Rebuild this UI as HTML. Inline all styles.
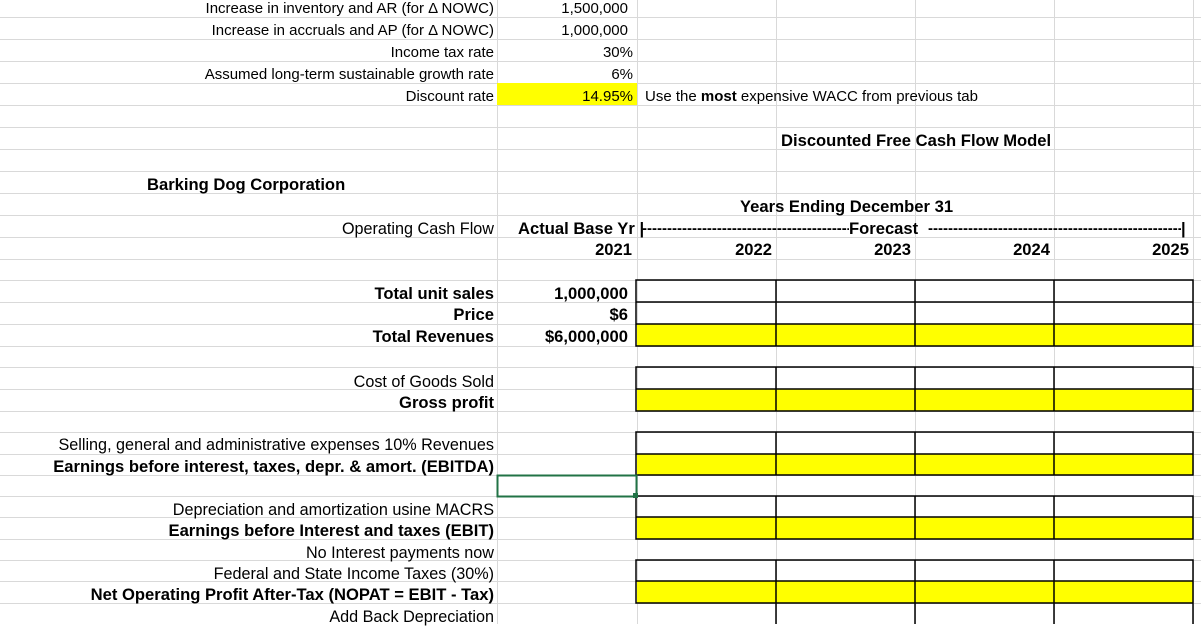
<!DOCTYPE html>
<html><head><meta charset="utf-8"><style>
body{margin:0;width:1201px;height:624px;overflow:hidden;background:#fff;position:relative;font-family:"Liberation Sans",Arial,sans-serif;color:#000}
.h{position:absolute;left:0;width:1201px;height:1px;background:#d9d9d9}
.v{position:absolute;top:0;height:624px;width:1px;background:#d9d9d9}
.t{position:absolute;height:22px;line-height:22px;font-size:16.2px;white-space:nowrap;margin-top:2px}
.r{text-align:right}
.b{font-weight:bold;font-size:16.6px}
.c{font-size:15px}
.y{background:#ffff00}
.d{position:absolute;overflow:hidden;height:22px;line-height:22px;font-size:15px;font-weight:bold;white-space:nowrap;margin-top:2px}
</style></head><body>
<div class="h" style="top:17px"></div><div class="h" style="top:39px"></div><div class="h" style="top:61px"></div><div class="h" style="top:83px"></div><div class="h" style="top:105px"></div><div class="h" style="top:127px"></div><div class="h" style="top:149px"></div><div class="h" style="top:171px"></div><div class="h" style="top:193px"></div><div class="h" style="top:215px"></div><div class="h" style="top:237px"></div><div class="h" style="top:259px"></div><div class="h" style="top:280px"></div><div class="h" style="top:302px"></div><div class="h" style="top:324px"></div><div class="h" style="top:346px"></div><div class="h" style="top:367px"></div><div class="h" style="top:389px"></div><div class="h" style="top:411px"></div><div class="h" style="top:432px"></div><div class="h" style="top:454px"></div><div class="h" style="top:475px"></div><div class="h" style="top:496px"></div><div class="h" style="top:517px"></div><div class="h" style="top:539px"></div><div class="h" style="top:560px"></div><div class="h" style="top:581px"></div><div class="h" style="top:603px"></div>
<div class="v" style="left:497px"></div><div class="v" style="left:637px"></div><div class="v" style="left:776px"></div><div class="v" style="left:915px"></div><div class="v" style="left:1054px"></div><div class="v" style="left:1193px"></div>

<div style="position:absolute;left:497px;top:83px;width:140px;height:22px;background:#ff0"></div>
<div class="y" style="position:absolute;left:637px;top:324px;width:556px;height:22px"></div>
<div class="y" style="position:absolute;left:637px;top:389px;width:556px;height:22px"></div>
<div class="y" style="position:absolute;left:637px;top:454px;width:556px;height:21px"></div>
<div class="y" style="position:absolute;left:637px;top:517px;width:556px;height:22px"></div>
<div class="y" style="position:absolute;left:637px;top:581px;width:556px;height:22px"></div>

<svg style="position:absolute;left:0;top:0" width="1201" height="624">
<g stroke="#000" stroke-width="1.5" fill="none">
<path d="M636 280H1193V346H636Z M636 302H1193 M636 324H1193 M776 280V346 M915 280V346 M1054 280V346"/>
<path d="M636 367H1193V411H636Z M636 389H1193 M776 367V411 M915 367V411 M1054 367V411"/>
<path d="M636 432H1193V475H636Z M636 454H1193 M776 432V475 M915 432V475 M1054 432V475"/>
<path d="M636 496H1193V539H636Z M636 517H1193 M776 496V539 M915 496V539 M1054 496V539"/>
<path d="M636 560H1193V603H636Z M636 581H1193 M776 560V624 M915 560V624 M1054 560V624 M1193 603V624"/>
</g>
<rect x="497.5" y="475.5" width="139" height="21" fill="none" stroke="#217346" stroke-width="2"/>
<rect x="633" y="493" width="5" height="5" fill="#217346"/>
</svg>

<div class="t r c" style="right:707px;top:-4px">Increase in inventory and AR (for Δ NOWC)</div>
<div class="t r c" style="right:573px;top:-4px">1,500,000</div>
<div class="t r c" style="right:707px;top:18px">Increase in accruals and AP (for Δ NOWC)</div>
<div class="t r c" style="right:573px;top:18px">1,000,000</div>
<div class="t r c" style="right:707px;top:40px">Income tax rate</div>
<div class="t r c" style="right:568px;top:40px">30%</div>
<div class="t r c" style="right:707px;top:62px">Assumed long-term sustainable growth rate</div>
<div class="t r c" style="right:568px;top:62px">6%</div>
<div class="t r c" style="right:707px;top:84px">Discount rate</div>
<div class="t r c" style="right:568px;top:84px">14.95%</div>
<div class="t c" style="left:645px;top:84px">Use the <b>most</b> expensive WACC from previous tab</div>

<div class="t b" style="left:781px;top:128px">Discounted Free Cash Flow Model</div>
<div class="t b" style="left:147px;top:172px">Barking Dog Corporation</div>
<div class="t b" style="left:740px;top:194px">Years Ending December 31</div>
<div class="t r" style="right:707px;top:216px">Operating Cash Flow</div>
<div class="t b" style="left:518px;top:216px">Actual Base Yr |</div>
<div class="d" style="left:642px;top:216px;width:207px">--------------------------------------------------------------------------------</div>
<div class="t b" style="left:849px;top:216px">Forecast</div>
<div class="d" style="left:928px;top:216px;width:253px">----------------------------------------------------------------------------------------------</div>
<div class="t b" style="left:1181px;top:216px">|</div>
<div class="t b r" style="right:569px;top:237px">2021</div>
<div class="t b r" style="right:429px;top:237px">2022</div>
<div class="t b r" style="right:290px;top:237px">2023</div>
<div class="t b r" style="right:151px;top:237px">2024</div>
<div class="t b r" style="right:12px;top:237px">2025</div>

<div class="t b r" style="right:707px;top:281px">Total unit sales</div>
<div class="t b r" style="right:573px;top:281px">1,000,000</div>
<div class="t b r" style="right:707px;top:302px">Price</div>
<div class="t b r" style="right:573px;top:302px">$6</div>
<div class="t b r" style="right:707px;top:324px">Total Revenues</div>
<div class="t b r" style="right:573px;top:324px">$6,000,000</div>
<div class="t r" style="right:707px;top:369px">Cost of Goods Sold</div>
<div class="t b r" style="right:707px;top:390px">Gross profit</div>
<div class="t r" style="right:707px;top:432px">Selling, general and administrative expenses 10% Revenues</div>
<div class="t b r" style="right:707px;top:454px">Earnings before interest, taxes, depr. &amp; amort. (EBITDA)</div>
<div class="t r" style="right:707px;top:497px">Depreciation and amortization usine MACRS</div>
<div class="t b r" style="right:707px;top:518px">Earnings before Interest and taxes (EBIT)</div>
<div class="t r" style="right:707px;top:540px">No Interest payments now</div>
<div class="t r" style="right:707px;top:561px">Federal and State Income Taxes (30%)</div>
<div class="t b r" style="right:707px;top:582px">Net Operating Profit After-Tax (NOPAT = EBIT - Tax)</div>
<div class="t r" style="right:707px;top:604px">Add Back Depreciation</div>
</body></html>
